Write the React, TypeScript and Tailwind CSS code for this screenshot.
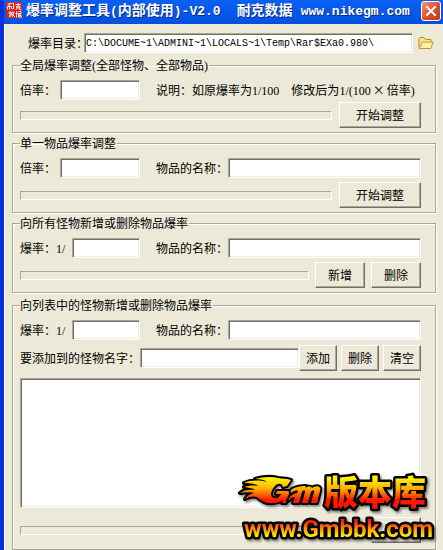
import React, { useState } from 'react';
import clsx from 'clsx';

const FIELD =
  'h-5 min-w-0 rounded-none border border-[#aca899] border-r-white border-b-white bg-white px-px text-black outline-none shadow-[inset_1px_1px_0_#716f64,inset_-1px_-1px_0_#f1efe2]';

const Latin = ({ children }: { children: React.ReactNode }) => (
  <span className="font-['Liberation_Serif',serif]">{children}</span>
);

const Group = ({ title, className, children }: { title: React.ReactNode; className?: string; children: React.ReactNode }) => (
  <fieldset
    className={clsx(
      'min-w-0 border border-[#aca899] pl-[7px] pr-[14px] pt-2 shadow-[1px_1px_0_#fff,inset_1px_1px_0_#fff]',
      className
    )}
  >
    <legend className="h-[14px] pr-px leading-[14px]">{title}</legend>
    {children}
  </fieldset>
);

const XpButton = ({ className, children }: { className?: string; children: React.ReactNode }) => (
  <button
    type="button"
    className={clsx(
      'h-[26px] shrink-0 border border-white border-r-[#716f64] border-b-[#716f64] bg-[#ece9d8] text-center shadow-[inset_-1px_-1px_0_#aca899] active:border-[#716f64]',
      className
    )}
  >
    {children}
  </button>
);

const ProgressBar = ({ label }: { label: string }) => (
  <div
    role="progressbar"
    aria-label={label}
    aria-valuenow={0}
    className="h-[9px] flex-1 border border-[#aca899] border-r-white border-b-white"
  />
);

const RateField = ({ id, fraction }: { id: string; fraction?: boolean }) => (
  <>
    <label htmlFor={id} className={clsx('shrink-0', fraction ? 'w-[52px]' : 'w-10')}>
      {fraction ? <>爆率：<Latin>1/</Latin></> : '倍率：'}
    </label>
    <input id={id} type="text" className={clsx(FIELD, 'shrink-0', fraction ? 'w-[68px]' : 'w-20')} />
  </>
);

const ItemField = ({ id }: { id: string }) => (
  <>
    <label htmlFor={id} className="ml-4 w-[72px] shrink-0">物品的名称：</label>
    <input id={id} type="text" className={clsx(FIELD, 'flex-1')} />
  </>
);

const AppIcon = () => (
  <svg viewBox="0 0 16 16" className="h-4 w-4 shrink-0" aria-hidden="true">
    <rect width="16" height="16" fill="#d6231c" />
    <g stroke="#fff" strokeWidth="0.900" fill="none">
      <path d="M1.500 2l5-0.800M4 2L2 5M1.500 7.500V4.500h4v2.500M3.500 4.500v3M7.500 1v6l-1-0.500M9.500 2.500H15M12.200 1v3M10.500 4.200h3.500v1.600h-3.500zM11.500 6l-2 2M13.300 6v1.500h2" />
      <path d="M4 9v6.500M2.500 11h4M6.500 9.500l-1.500 3M3 14.500L6 12.500M8 9.500l-1.500 5.500M6 12l3 3M10.500 9v6.500M9.500 11.500h2.500M12.500 9.500h2.500v2h-2.500v3.500M14 11.500v2M13 13.500h2.200v1.700h-2.200z" />
    </g>
  </svg>
);

const FolderIcon = () => (
  <svg viewBox="0 0 16 14" className="h-[14px] w-4" aria-hidden="true">
    <path d="M1 11.500V3L2 1.500h4L7.500 3.500H13V7" fill="#f9e58a" stroke="#b98a1d" />
    <path d="M1.300 12.500L4.500 6h10.700L12.800 12.500z" fill="#fff1a3" stroke="#c4962a" strokeLinejoin="round" />
  </svg>
);

const SiteLogo = () => (
  <svg viewBox="0 -6 204 82" className="h-[82px] w-[204px]" role="img" aria-label="Gm版本库 www.Gmbbk.com">
    <defs>
      <linearGradient id="fireTop" gradientUnits="userSpaceOnUse" x1="0" y1="2" x2="0" y2="31">
        <stop offset="0.050" stopColor="#fff200" />
        <stop offset="0.400" stopColor="#ffb000" />
        <stop offset="0.800" stopColor="#ff1400" />
      </linearGradient>
      <linearGradient id="fireBottom" gradientUnits="userSpaceOnUse" x1="0" y1="45" x2="0" y2="62">
        <stop offset="0.100" stopColor="#ff1e00" />
        <stop offset="0.550" stopColor="#ff9a00" />
        <stop offset="0.950" stopColor="#fff000" />
      </linearGradient>
      <filter id="drop" x="-5%" y="-5%" width="110%" height="115%">
        <feDropShadow dx="1.500" dy="2" stdDeviation="1" floodColor="#000" floodOpacity="0.450" />
      </filter>
    </defs>
    <g stroke="#000" strokeLinejoin="round" paintOrder="stroke" filter="url(#drop)">
      <g fill="url(#fireTop)">
        {/* flaming G */}
        <path
          strokeWidth="4"
          d="M55 5C50 3 46 4 42 3C35 1 26 2 19 4C25 4 29 5 31 7C23 5 14 5 8 8C15 8 20 9 22 11C16 10 11 11 8 12C13 13 17 13 19 15C13 14 8 15 4 18C10 17 15 17 18 18C14 19 11 21 9 24C14 21 18 21 21 22C25 26 31 29 38 28C42 28 45 26 47 25L46 28H50L54 16H41L40 19H45C44 22 41 24 38 23C33 22 35 15 39 11C42 8 46 8 47 12L51 11Z"
        />
        {/* flaming m */}
        <path
          strokeWidth="4"
          d="M56 14C62 11 66 11 70 11L69 13C72 11 75 11 76 13C80 10 86 11 84 16L81 28H75L78 17C79 15 76 15 75 17L72 28H66L69 17C70 15 67 15 66 17L63 28H57L59 22C56 22 54 24 52 26C53 22 56 19 61 18L62 16C60 15 58 16 55 18C54 16 55 15 56 14Z"
        />
        <text x="88" y="30" strokeWidth="5" fontFamily="'Noto Sans CJK SC', sans-serif" fontSize="34" fontWeight="900">版本库</text>
      </g>
      <text x="8" y="62" fill="url(#fireBottom)" strokeWidth="5" fontFamily="Roboto, sans-serif" fontSize="24" fontWeight="700">
        www.Gmbbk.com
      </text>
    </g>
  </svg>
);

const App = () => {
  const [path, setPath] = useState('C:\\DOCUME~1\\ADMINI~1\\LOCALS~1\\Temp\\Rar$EXa0.980\\');

  return (
    <div className="relative min-h-screen overflow-hidden border-l-4 border-[#0831d9] bg-[#ece9d8] font-['Noto_Sans_CJK_SC',sans-serif] text-[12px] leading-[14px] whitespace-nowrap text-black shadow-[inset_1px_0_0_#fff]">
      <header className="flex h-6 items-start bg-linear-to-b from-[#0b60f4] via-[#0458ee] to-[#0450dc] pr-[2px]">
        <div className="flex h-5 flex-1 items-center gap-1 pl-[2px]">
          <AppIcon />
          <h1 className="flex items-baseline text-[14px] leading-5 font-bold text-white [text-shadow:1px_1px_0_#0a2a80]">
            <span>
              爆率调整工具<span className="font-['Liberation_Mono',monospace] text-[13px]">(</span>内部使用
              <span className="font-['Liberation_Mono',monospace] text-[13px]">)-V2.0</span>
            </span>
            <span className="ml-4">耐克数据</span>
            <span className="ml-2 font-['Liberation_Mono',monospace] text-[13px]">www.nikegm.com</span>
          </h1>
        </div>
        <button
          type="button"
          aria-label="关闭"
          className="mt-px flex h-5 w-5 shrink-0 items-center justify-center rounded-[3px] border border-white bg-linear-to-br from-[#f0927a] via-[#e0502f] to-[#c23a18]"
        >
          <svg viewBox="0 0 12 12" className="h-3 w-3" stroke="#fff" strokeWidth="2" strokeLinecap="square" aria-hidden="true">
            <path d="M2 2l8 8M10 2l-8 8" />
          </svg>
        </button>
      </header>

      <main className="pr-[7px] pb-px pl-2">
        <div className="flex items-center pt-[9px] pb-[5px] pl-4">
          <label htmlFor="path" className="w-14 shrink-0">爆率目录：</label>
          <input
            id="path"
            type="text"
            value={path}
            onChange={e => setPath(e.target.value)}
            className={clsx(FIELD, "flex-1 font-['Liberation_Mono',monospace] text-[10px]")}
          />
          <button type="button" aria-label="浏览" className="ml-[5px] shrink-0 pr-[2px]">
            <FolderIcon />
          </button>
        </div>

        <Group title={<>全局爆率调整<Latin>(</Latin>全部怪物、全部物品<Latin>)</Latin></>} className="pb-1">
          <div className="flex items-center">
            <RateField id="global-rate" />
            <p className="ml-4">
              说明：如原爆率为<Latin>1/100</Latin>　修改后为<Latin>1/(100</Latin>
              <span className="px-[2px]">×</span>倍率<Latin>)</Latin>
            </p>
          </div>
          <div className="mt-[2px] flex items-center gap-[7px]">
            <ProgressBar label="全局爆率调整" />
            <XpButton className="w-[82px]">开始调整</XpButton>
          </div>
        </Group>

        <Group title="单一物品爆率调整" className="mt-[3px] pb-1">
          <div className="flex items-center">
            <RateField id="single-rate" />
            <ItemField id="single-item" />
          </div>
          <div className="mt-1 flex items-center gap-[7px]">
            <ProgressBar label="单一物品爆率调整" />
            <XpButton className="w-[82px]">开始调整</XpButton>
          </div>
        </Group>

        <Group title="向所有怪物新增或删除物品爆率" className="mt-[3px] pb-1">
          <div className="flex items-center">
            <RateField id="all-rate" fraction />
            <ItemField id="all-item" />
          </div>
          <div className="mt-1 flex items-center gap-[6px]">
            <ProgressBar label="向所有怪物新增或删除" />
            <XpButton className="w-[50px]">新增</XpButton>
            <XpButton className="w-[50px]">删除</XpButton>
          </div>
        </Group>

        <Group title="向列表中的怪物新增或删除物品爆率" className="mt-[5px] pb-[6px]">
          <div className="flex items-center">
            <RateField id="list-rate" fraction />
            <ItemField id="list-item" />
          </div>
          <div className="mt-[5px] flex items-center">
            <label htmlFor="monster" className="w-[120px] shrink-0">要添加到的怪物名字：</label>
            <input id="monster" type="text" className={clsx(FIELD, 'flex-1')} />
            <div className="flex gap-1">
              <XpButton className="w-[38px]">添加</XpButton>
              <XpButton className="w-[38px]">删除</XpButton>
              <XpButton className="w-[38px]">清空</XpButton>
            </div>
          </div>
          <textarea aria-label="怪物列表" className={clsx(FIELD, 'mt-[7px] block h-[130px] w-full resize-none')} />
          <div className="mt-[9px] flex items-center gap-[6px]">
            <ProgressBar label="向列表中的怪物删除" />
            <XpButton className="w-[50px]">删除</XpButton>
          </div>
        </Group>
      </main>

      <div className="pointer-events-none absolute right-[3px] bottom-0">
        <SiteLogo />
      </div>
    </div>
  );
};

export default App;
